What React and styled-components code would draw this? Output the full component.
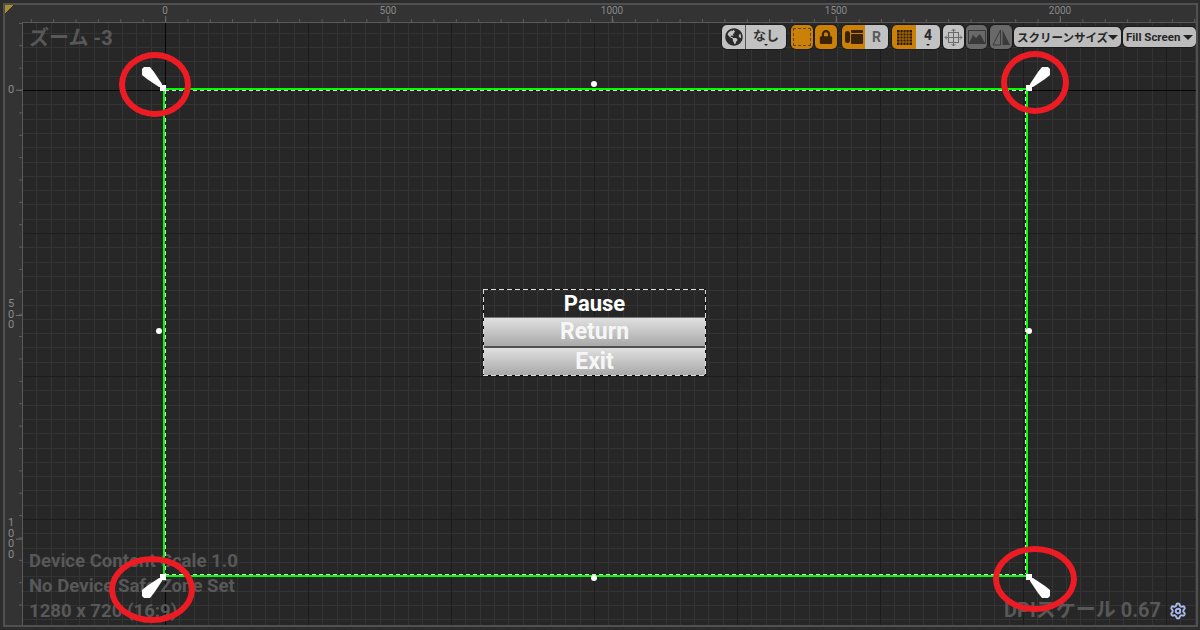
import React from 'react';
import styled, { createGlobalStyle, css } from 'styled-components';
import { FaGlobeAmericas, FaLock } from 'react-icons/fa';
import { Settings } from 'lucide-react';

const CJK = `Roboto, "Noto Sans CJK JP", sans-serif`;

const GlobalStyle = createGlobalStyle`
  html, body {
    margin: 0;
    width: 1200px;
    height: 630px;
    overflow: hidden;
    background-color: #2d2d2d;
    font-family: ${CJK};
  }
`;

// dashed selection edge, black under the gaps like the editor draws it
const dashedEdges = (dash, gap) => {
  const h = `repeating-linear-gradient(to right, #dcdcdc 0 ${dash}px, #0c0c0c ${dash}px ${dash + gap}px)`;
  const v = `repeating-linear-gradient(to bottom, #dcdcdc 0 ${dash}px, #0c0c0c ${dash}px ${dash + gap}px)`;
  return css`
    background-image: ${h}, ${h}, ${v}, ${v};
    background-size: 100% 1px, 100% 1px, 1px 100%, 1px 100%;
    background-position: 0 0, 0 100%, 0 0, 100% 0;
    background-repeat: no-repeat;
  `;
};

const Window = styled.div`
  box-sizing: border-box;
  width: 1200px;
  height: 630px;
  padding: 3px 2px 3px 3px;
`;

const Frame = styled.div`
  box-sizing: border-box;
  height: 100%;
  border: 2px solid #505050;
  display: grid;
  grid-template-columns: 17px 1fr;
  grid-template-rows: 17px 1fr;
  background-color: #333333;
`;

const Corner = styled.div`
  background: linear-gradient(135deg, #a98d2f 0, #a98d2f 6px, transparent 6px);
`;

const TopRuler = styled.div`
  position: relative;
  background-image: linear-gradient(to right, #5e5e5e 1px, transparent 1px);
  background-size: 22.38px 3px;
  background-position: 143px bottom;
  background-repeat: repeat-x;
`;

const LeftRuler = styled.div`
  position: relative;
  background-image: linear-gradient(to bottom, #5e5e5e 1px, transparent 1px);
  background-size: 3px 22.38px;
  background-position: right 68px;
  background-repeat: repeat-y;
`;

const TopMark = styled.div`
  position: absolute;
  left: ${(p) => p.$at}px;
  top: 0;
  height: 17px;
  transform: translateX(-50%);
  font-size: 10px;
  line-height: 11px;
  color: #8a8a8a;
  text-align: center;
  &::after {
    content: '';
    position: absolute;
    left: 50%;
    bottom: 0;
    width: 1px;
    height: 6px;
    background-color: #707070;
  }
`;

const LeftMark = styled.div`
  position: absolute;
  right: 0;
  top: ${(p) => p.$at}px;
  width: 100%;
  transform: translateY(-50%);
  font-size: 11px;
  line-height: 10.7px;
  color: #8a8a8a;
  padding-left: 2px;
  box-sizing: border-box;
  &::after {
    content: '';
    position: absolute;
    right: 0;
    top: 50%;
    width: 6px;
    height: 1px;
    background-color: #707070;
  }
`;

const Digit = styled.div`
  width: 8px;
  text-align: center;
`;

const Canvas = styled.div`
  position: relative;
  overflow: hidden;
  border-top: 1px solid #5a5a5a;
  border-left: 1px solid #5a5a5a;
  background-color: #272727;
  background-image:
    linear-gradient(#050505, #050505),
    linear-gradient(#050505, #050505),
    repeating-linear-gradient(to right, #1c1c1c 142px, #1c1c1c 143px, transparent 143px, transparent 285px),
    repeating-linear-gradient(to bottom, #1c1c1c 67px, #1c1c1c 68px, transparent 68px, transparent 210px),
    repeating-linear-gradient(to right, #343434 13.3px, #343434 14.3px, transparent 14.3px, transparent 27.6px),
    repeating-linear-gradient(to bottom, #343434 9.8px, #343434 10.8px, transparent 10.8px, transparent 24.1px);
  background-size: 1px 100%, 100% 1px, auto, auto, auto, auto;
  background-position: 142px 0, 0 67px, 0 0, 0 0, 0 0, 0 0;
  background-repeat: no-repeat;
`;

const ZoomLabel = styled.div`
  position: absolute;
  left: 6px;
  top: 1px;
  font-size: 20px;
  line-height: 28px;
  font-weight: 700;
  color: #585858;
`;

const InfoBlock = styled.div`
  position: absolute;
  left: 6px;
  bottom: 1px;
  display: flex;
  flex-direction: column;
`;

const InfoLine = styled.div`
  font-size: 18.6px;
  line-height: 25px;
  font-weight: 700;
  color: #585858;
  white-space: nowrap;
`;

const DpiBlock = styled.div`
  position: absolute;
  right: 9px;
  bottom: 2px;
  display: flex;
  align-items: center;
  gap: 8px;
  font-size: 20px;
  line-height: 25px;
  font-weight: 700;
  color: #585858;
`;

const Gear = styled(Settings)`
  color: #a9b9ea;
  display: block;
`;

const Toolbar = styled.div`
  position: absolute;
  top: 2px;
  right: 0;
  display: flex;
  align-items: center;
`;

const Group = styled.div`
  display: flex;
  height: 24px;
  margin-left: ${(p) => p.$gap ?? 4}px;
  border-radius: 5px;
  overflow: hidden;
  box-shadow: 0 0 0 1px #1c1c1c;
`;

const Segment = styled.div`
  width: ${(p) => p.$w}px;
  display: flex;
  flex-direction: column;
  align-items: center;
  justify-content: center;
  position: relative;
  background-color: ${(p) => (p.$on ? '#cb8008' : '#c2c2c2')};
  color: #333333;
  font-size: 13px;
  font-weight: 700;
  line-height: 13px;
  border-left: ${(p) => (p.$split ? '1px solid #555555' : 'none')};
  box-sizing: border-box;
`;

const DimSegment = styled(Segment)`
  background-color: #696969;
`;

const BigLetter = styled.span`
  font-size: 14px;
  color: ${(p) => p.$color};
`;

const TinyCaret = styled.span`
  width: 0;
  height: 0;
  margin-top: 2px;
  border-left: 2px solid transparent;
  border-right: 2px solid transparent;
  border-top: 2px solid #222222;
`;

const Dropdown = styled.div`
  box-sizing: border-box;
  width: ${(p) => p.$w}px;
  height: 20px;
  margin-left: 2px;
  padding: 0 3px;
  display: flex;
  align-items: center;
  justify-content: space-between;
  border-radius: 5px;
  background-color: #bdbdbd;
  box-shadow: 0 0 0 1px #1c1c1c;
  color: #262626;
  font-size: 11.5px;
  font-weight: 700;
  white-space: nowrap;
`;

const Caret = styled.span`
  width: 0;
  height: 0;
  border-left: 5px solid transparent;
  border-right: 5px solid transparent;
  border-top: 5px solid #222222;
`;

const DashedSquare = styled.div`
  width: 16px;
  height: 16px;
  border: 1px dashed #5c4414;
`;

const GreenFrame = styled.div`
  position: absolute;
  left: 140px;
  top: 65px;
  width: 865px;
  height: 489px;
  box-sizing: border-box;
  border: 2px solid #00ff00;
`;

const DashedFrame = styled.div`
  position: absolute;
  left: 142px;
  top: 67px;
  width: 861px;
  height: 485px;
  ${dashedEdges(4, 3)}
`;

const Dot = styled.div`
  position: absolute;
  left: ${(p) => p.$x - 23}px;
  top: ${(p) => p.$y - 23}px;
  width: 6px;
  height: 6px;
  margin: -3px 0 0 -3px;
  border-radius: 50%;
  background-color: #ffffff;
`;

const Anchor = styled.svg`
  position: absolute;
  left: ${(p) => p.$x - 23}px;
  top: ${(p) => p.$y - 23}px;
  width: 24px;
  height: 24px;
  transform: scale(${(p) => (p.$flipX ? -1 : 1)}, ${(p) => (p.$flipY ? -1 : 1)});
`;

const Ring = styled.div`
  position: absolute;
  left: ${(p) => p.$x - 23}px;
  top: ${(p) => p.$y - 23}px;
  width: ${(p) => p.$w}px;
  height: ${(p) => p.$h}px;
  box-sizing: border-box;
  border: 6px solid #ed1c24;
  border-radius: 50%;
`;

const Menu = styled.div`
  position: absolute;
  left: 460px;
  top: 266px;
  width: 223px;
  height: 87px;
  box-sizing: border-box;
  padding: 1px;
  display: flex;
  flex-direction: column;
  &::after {
    content: '';
    position: absolute;
    inset: 0;
    ${dashedEdges(5, 3)}
  }
`;

const MenuTitle = styled.div`
  height: 27px;
  display: flex;
  align-items: center;
  justify-content: center;
  color: #ffffff;
  font-size: 22px;
  font-weight: 700;
`;

const MenuButton = styled.div`
  flex: 1;
  display: flex;
  align-items: center;
  justify-content: center;
  box-sizing: border-box;
  border-top: ${(p) => p.$edge};
  background: linear-gradient(to bottom, #e0e0e0, #a9a9a9);
  color: #f6f6f6;
  font-size: 23px;
  font-weight: 700;
`;

const handlePath = 'M0 2 L2 0 L8 0 L12 5 L20 17 L20 18 L24 18 L24 24 L18 24 L18 20 L17 20 L5 12 L0 8 Z';

const Handle = (props) => (
  <Anchor viewBox="0 0 24 24" {...props}>
    <path d={handlePath} fill="#ffffff" />
  </Anchor>
);

const Vertical = ({ text }) => text.split('').map((c, i) => <Digit key={i}>{c}</Digit>);

export default function App() {
  return (
    <>
      <GlobalStyle />
      <Window>
        <Frame>
          <Corner />
          <TopRuler>
            <TopMark $at={143}>0</TopMark>
            <TopMark $at={366}>500</TopMark>
            <TopMark $at={590}>1000</TopMark>
            <TopMark $at={814}>1500</TopMark>
            <TopMark $at={1038}>2000</TopMark>
          </TopRuler>
          <LeftRuler>
            <LeftMark $at={68}><Vertical text="0" /></LeftMark>
            <LeftMark $at={293}><Vertical text="500" /></LeftMark>
            <LeftMark $at={517}><Vertical text="1000" /></LeftMark>
          </LeftRuler>
          <Canvas>
            <ZoomLabel>ズーム -3</ZoomLabel>
            <InfoBlock>
              <InfoLine>Device Content Scale 1.0</InfoLine>
              <InfoLine>No Device Safe Zone Set</InfoLine>
              <InfoLine>1280 x 720 (16:9)</InfoLine>
            </InfoBlock>
            <DpiBlock>
              DPIスケール 0.67
              <Gear size={18} strokeWidth={2.6} />
            </DpiBlock>

            <GreenFrame />
            <DashedFrame />
            <Dot $x={594} $y={84} />
            <Dot $x={159} $y={331} />
            <Dot $x={1029} $y={331} />
            <Dot $x={594} $y={578} />

            <Menu>
              <MenuTitle>Pause</MenuTitle>
              <MenuButton $edge="1px solid #777777">Return</MenuButton>
              <MenuButton $edge="2px solid #505050">Exit</MenuButton>
            </Menu>

            <Handle $x={142} $y={67} />
            <Handle $x={1026} $y={67} $flipX />
            <Handle $x={142} $y={574} $flipY />
            <Handle $x={1026} $y={574} $flipX $flipY />

            <Ring $x={119} $y={52} $w={72} $h={65} />
            <Ring $x={1001} $y={51} $w={68} $h={63} />
            <Ring $x={109} $y={556} $w={86} $h={67} />
            <Ring $x={993} $y={546} $w={84} $h={66} />

            <Toolbar>
              <Group>
                <Segment $w={23}><FaGlobeAmericas size={18} color="#2a2a2a" /></Segment>
                <Segment $w={41} $split>なし<TinyCaret /></Segment>
              </Group>
              <Group $gap={5}>
                <Segment $w={22} $on><DashedSquare /></Segment>
              </Group>
              <Group $gap={2}>
                <Segment $w={22} $on><FaLock size={14} color="#3a2208" /></Segment>
              </Group>
              <Group $gap={5}>
                <Segment $w={23} $on>
                  <svg width="18" height="14" viewBox="0 0 18 14">
                    <rect x="0" y="1" width="5" height="12" rx="2.5" fill="#3a2208" />
                    <rect x="6" y="0" width="12" height="3" rx="1" fill="#3a2208" />
                    <rect x="6" y="4" width="12" height="10" rx="1" fill="#3a2208" />
                  </svg>
                </Segment>
                <Segment $w={23}><BigLetter $color="#5a5a5a">R</BigLetter></Segment>
              </Group>
              <Group>
                <Segment $w={24} $on>
                  <svg width="15" height="15" viewBox="0 0 15 15">
                    <rect width="15" height="15" fill="#2a1a05" />
                    <path d="M3 0V15M6 0V15M9 0V15M12 0V15M0 3H15M0 6H15M0 9H15M0 12H15" stroke="#cb8008" strokeWidth="0.8" />
                  </svg>
                </Segment>
                <Segment $w={24}><BigLetter $color="#2a2a2a">4</BigLetter><TinyCaret /></Segment>
              </Group>
              <Group $gap={3}>
                <Segment $w={21}>
                  <svg width="19" height="19" viewBox="0 0 19 19" fill="none" stroke="#6a6a6a" strokeWidth="1">
                    <path d="M9.5 1V18M1 9.5H18M7.5 3L9.5 1L11.5 3M7.5 16L9.5 18L11.5 16M3 7.5L1 9.5L3 11.5M16 7.5L18 9.5L16 11.5" />
                    <rect x="4.5" y="4.5" width="10" height="10" />
                  </svg>
                </Segment>
              </Group>
              <Group $gap={2}>
                <DimSegment $w={21}>
                  <svg width="18" height="14" viewBox="0 0 18 14">
                    <rect x="0.5" y="0.5" width="17" height="13" fill="none" stroke="#3a3a3a" />
                    <path d="M1 13L5 5L8 8L12 4L17 13Z" fill="#3a3a3a" />
                  </svg>
                </DimSegment>
              </Group>
              <Group $gap={3}>
                <DimSegment $w={22}>
                  <svg width="19" height="17" viewBox="0 0 19 17">
                    <path d="M8.5 1V16H1Z" fill="none" stroke="#3a3a3a" />
                    <path d="M10.5 1V16H18Z" fill="#3a3a3a" />
                  </svg>
                </DimSegment>
              </Group>
              <Dropdown $w={107}>スクリーンサイズ<Caret /></Dropdown>
              <Dropdown $w={73}>Fill Screen<Caret /></Dropdown>
            </Toolbar>
          </Canvas>
        </Frame>
      </Window>
    </>
  );
}
